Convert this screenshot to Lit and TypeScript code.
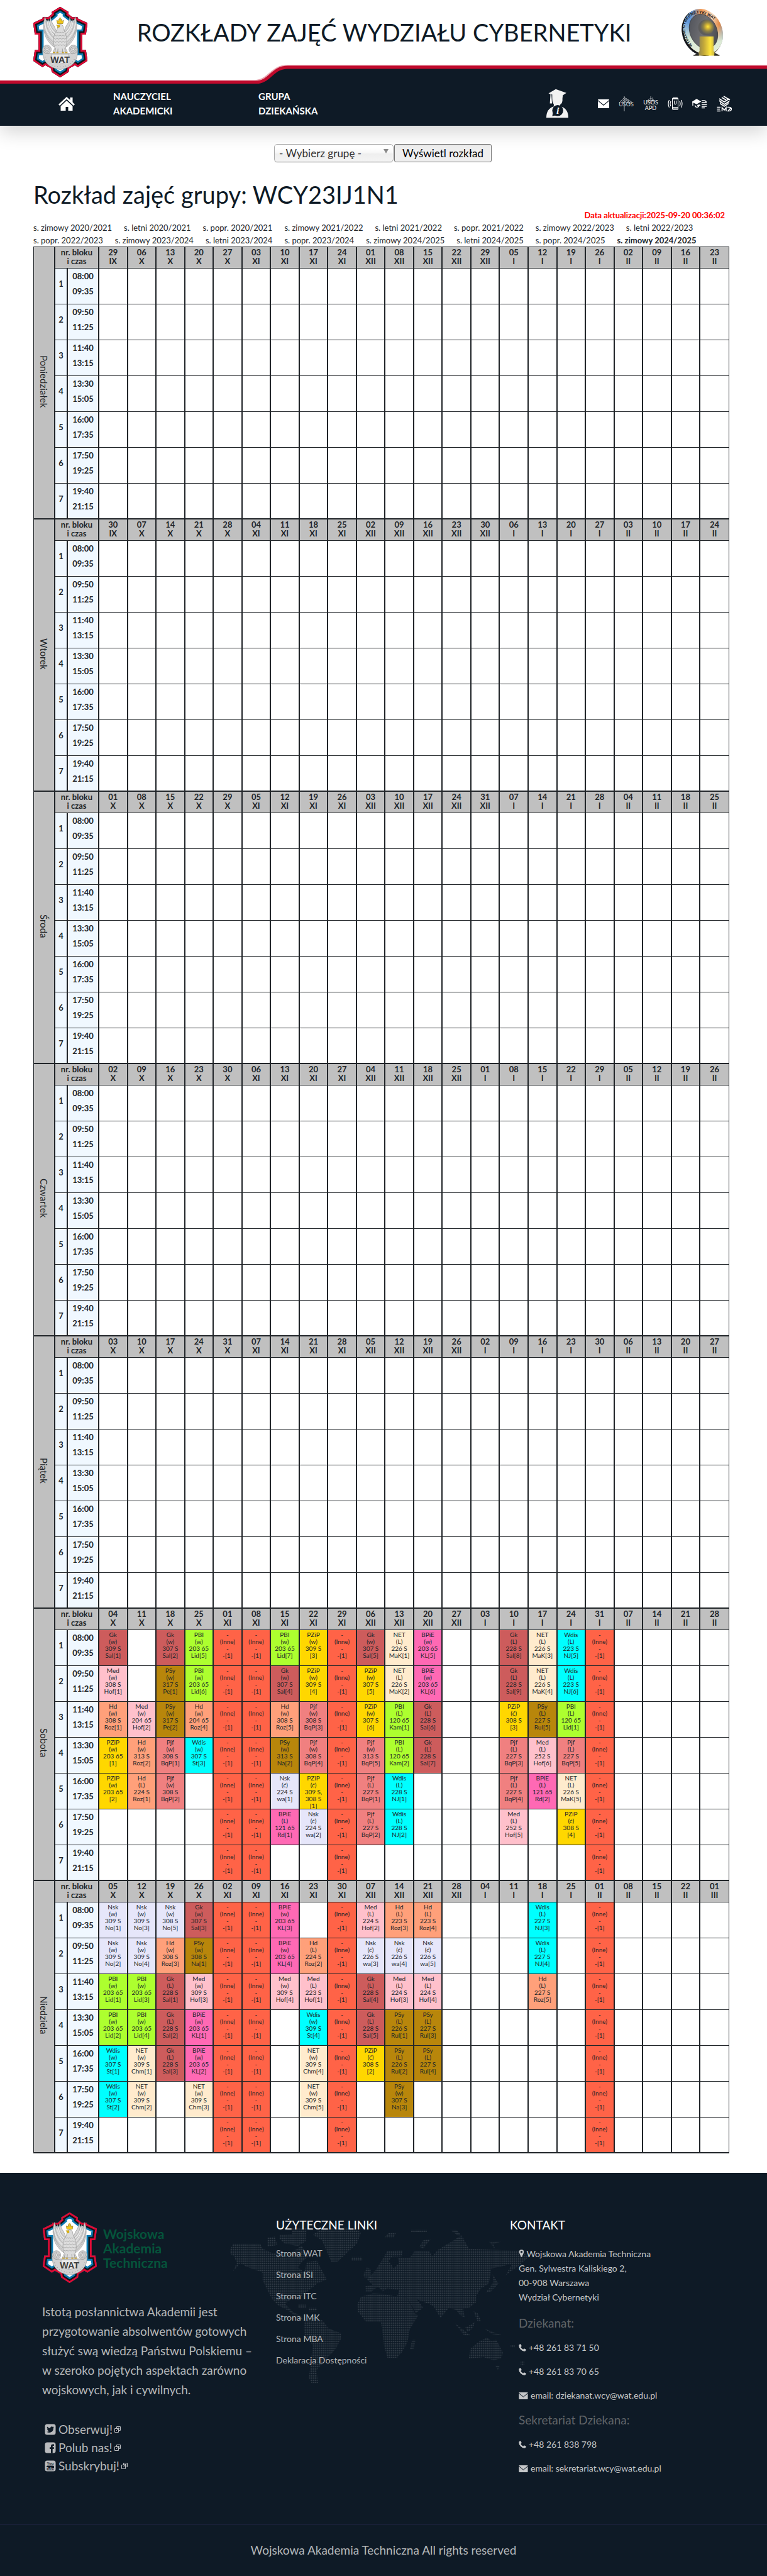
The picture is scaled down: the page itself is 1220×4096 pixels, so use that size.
import { LitElement, html, css, svg } from "lit";
import { customElement } from "lit/decorators.js";

/* ---------- timetable data ---------- */

const SLOTS = [
  ["08:00", "09:35"],
  ["09:50", "11:25"],
  ["11:40", "13:15"],
  ["13:30", "15:05"],
  ["16:00", "17:35"],
  ["17:50", "19:25"],
  ["19:40", "21:15"],
];

const WEEKS = 22;
const ROMAN = ["I", "II", "III", "IV", "V", "VI", "VII", "VIII", "IX", "X", "XI", "XII"];
const FIRST_MONDAY = Date.UTC(2025, 8, 29);
const DAY_MS = 86400000;

const OFF = Array(7).fill("-|Inne|-|-[1]");

type Column = string[];
interface Day {
  name: string;
  lessons: Record<number, Column>;
}

const SATURDAY: Record<number, Column> = {
  0: ["Gk|w|309 S|Sal[1]", "Med|w|308 S|Hof[1]", "Hd|w|308 S|Roz[1]", "PZiP|w|203 65|[1]", "PZiP|w|203 65|[2]"],
  1: ["", "", "Med|w|204 65|Hof[2]", "Hd|w|313 S|Roz[2]", "Hd|L|224 S|Roz[1]"],
  2: ["Gk|w|307 S|Sal[2]", "PSy|w|317 S|Pe[1]", "PSy|w|317 S|Pe[2]", "Pjf|w|308 S|BqP[1]", "Pjf|w|308 S|BqP[2]"],
  3: ["PBI|w|203 65|Lid[5]", "PBI|w|203 65|Lid[6]", "Hd|w|204 65|Roz[4]", "Wdis|w|307 S|St[3]"],
  4: OFF,
  5: OFF,
  6: ["PBI|w|203 65|Lid[7]", "Gk|w|307 S|Sal[4]", "Hd|w|308 S|Roz[5]", "PSy|w|313 S|Na[2]", "Nsk|ć|224 S|wa[1]", "BPiE|L|121 65|Rd[1]"],
  7: ["PZiP|w|309 S|[3]", "PZiP|w|309 S|[4]", "Pjf|w|308 S|BqP[3]", "Pjf|w|308 S|BqP[4]", "PZiP|ć|309 S,|308 S|[1]", "Nsk|ć|224 S|wa[2]"],
  8: OFF,
  9: ["Gk|w|307 S|Sal[5]", "PZiP|w|307 S|[5]", "PZiP|w|307 S|[6]", "Pjf|w|313 S|BqP[5]", "Pjf|L|227 S|BqP[1]", "Pjf|L|227 S|BqP[2]"],
  10: ["NET|L|226 S|MaK[1]", "NET|L|226 S|MaK[2]", "PBI|L|120 65|Kam[1]", "PBI|L|120 65|Kam[2]", "Wdis|L|228 S|NJ[1]", "Wdis|L|228 S|NJ[2]"],
  11: ["BPiE|w|203 65|KL[5]", "BPiE|w|203 65|KL[6]", "Gk|L|228 S|Sal[6]", "Gk|L|228 S|Sal[7]"],
  14: ["Gk|L|228 S|Sal[8]", "Gk|L|228 S|Sal[9]", "PZiP|ć|308 S|[3]", "Pjf|L|227 S|BqP[3]", "Pjf|L|227 S|BqP[4]", "Med|L|252 S|Hof[5]"],
  15: ["NET|L|226 S|MaK[3]", "NET|L|226 S|MaK[4]", "PSy|L|227 S|Rul[5]", "Med|L|252 S|Hof[6]", "BPiE|L|121 65|Rd[2]"],
  16: ["Wdis|L|223 S|NJ[5]", "Wdis|L|223 S|NJ[6]", "PBI|L|120 65|Lid[1]", "Pjf|L|227 S|BqP[5]", "NET|L|226 S|MaK[5]", "PZiP|ć|308 S|[4]"],
  17: OFF,
};

const SUNDAY: Record<number, Column> = {
  0: ["Nsk|w|309 S|No[1]", "Nsk|w|309 S|No[2]", "PBI|w|203 65|Lid[1]", "PBI|w|203 65|Lid[2]", "Wdis|w|307 S|St[1]", "Wdis|w|307 S|St[2]"],
  1: ["Nsk|w|309 S|No[3]", "Nsk|w|309 S|No[4]", "PBI|w|203 65|Lid[3]", "PBI|w|203 65|Lid[4]", "NET|w|309 S|Chm[1]", "NET|w|309 S|Chm[2]"],
  2: ["Nsk|w|308 S|No[5]", "Hd|w|308 S|Roz[3]", "Gk|L|228 S|Sal[1]", "Gk|L|228 S|Sal[2]", "Gk|L|228 S|Sal[3]"],
  3: ["Gk|w|307 S|Sal[3]", "PSy|w|308 S|Na[1]", "Med|w|309 S|Hof[3]", "BPiE|w|203 65|KL[1]", "BPiE|w|203 65|KL[2]", "NET|w|309 S|Chm[3]"],
  4: OFF,
  5: OFF,
  6: ["BPiE|w|203 65|KL[3]", "BPiE|w|203 65|KL[4]", "Med|w|309 S|Hof[4]"],
  7: ["", "Hd|L|224 S|Roz[2]", "Med|L|223 S|Hof[1]", "Wdis|w|309 S|St[4]", "NET|w|309 S|Chm[4]", "NET|w|309 S|Chm[5]"],
  8: OFF,
  9: ["Med|L|224 S|Hof[2]", "Nsk|ć|226 S|wa[3]", "Gk|L|228 S|Sal[4]", "Gk|L|228 S|Sal[5]", "PZiP|ć|308 S|[2]"],
  10: ["Hd|L|223 S|Roz[3]", "Nsk|ć|226 S|wa[4]", "Med|L|224 S|Hof[3]", "PSy|L|226 S|Rul[1]", "PSy|L|226 S|Rul[2]", "PSy|w|307 S|Na[3]"],
  11: ["Hd|L|223 S|Roz[4]", "Nsk|ć|226 S|wa[5]", "Med|L|224 S|Hof[4]", "PSy|L|227 S|Rul[3]", "PSy|L|227 S|Rul[4]"],
  15: ["Wdis|L|227 S|NJ[3]", "Wdis|L|227 S|NJ[4]", "Hd|L|227 S|Roz[5]"],
  17: OFF,
};

const DAYS: Day[] = [
  { name: "Poniedziałek", lessons: {} },
  { name: "Wtorek", lessons: {} },
  { name: "Środa", lessons: {} },
  { name: "Czwartek", lessons: {} },
  { name: "Piątek", lessons: {} },
  { name: "Sobota", lessons: SATURDAY },
  { name: "Niedziela", lessons: SUNDAY },
];

const SEMESTERS = [
  "s. zimowy 2020/2021", "s. letni 2020/2021", "s. popr. 2020/2021",
  "s. zimowy 2021/2022", "s. letni 2021/2022", "s. popr. 2021/2022",
  "s. zimowy 2022/2023", "s. letni 2022/2023", "s. popr. 2022/2023",
  "s. zimowy 2023/2024", "s. letni 2023/2024", "s. popr. 2023/2024",
  "s. zimowy 2024/2025", "s. letni 2024/2025", "s. popr. 2024/2025",
];

/* ---------- drawings ---------- */

const BADGE_OUTLINE =
  "M153 15 L196 42 L194 52 L216 69 L243 68 L240 74 L292 98 L284 157 L265 157 L265 235 L284 235 L292 290 L243 322 L228 312 L199 328 L196 347 L153 375 L110 347 L107 328 L78 312 L63 322 L16 290 L24 235 L43 235 L43 157 L24 157 L16 98 L66 74 L63 68 L92 69 L112 52 L110 42 Z";

const wing = svg`
  <path d="M76 66 Q60 115 78 165 Q92 198 122 220 L140 150 Q128 128 122 112 Q108 96 104 66 L98 96 L92 78 L88 98 L82 84 Z" fill="#d4d4d4" stroke="#8b8b8b" stroke-width="2"/>
  <path d="M80 86 Q82 140 126 178 M90 92 Q94 136 130 160 M100 92 Q106 128 134 146 M72 110 Q76 165 122 198 M74 134 Q86 180 120 210" fill="none" stroke="#9a9a9a" stroke-width="2"/>
  <path d="M86 84 Q92 130 128 168 M96 88 Q100 130 132 152 M76 100 Q78 150 124 188" fill="none" stroke="#f5f5f5" stroke-width="3"/>`;

const scroll = svg`
  <circle cx="86" cy="232" r="22" fill="#cfcfcf" stroke="#8b8b8b" stroke-width="2"/>
  <circle cx="86" cy="232" r="14" fill="none" stroke="#8f8f8f" stroke-width="3" stroke-dasharray="5 4"/>
  <circle cx="86" cy="232" r="6" fill="#e8e8e8" stroke="#8f8f8f" stroke-width="2"/>`;

const badge = (id: string) => svg`
  <svg class="badge" viewBox="14 13 280 364" role="img" aria-label="Godło WAT">
    <clipPath id=${id}><path d=${BADGE_OUTLINE}/></clipPath>
    <g clip-path="url(#${id})">
      <path d=${BADGE_OUTLINE} fill="#fff" stroke="#0a7ab0" stroke-width="52"/>
      <path d=${BADGE_OUTLINE} fill="none" stroke="#12161c" stroke-width="34"/>
      <path d=${BADGE_OUTLINE} fill="none" stroke="#e00a35" stroke-width="18"/>
    </g>
    ${wing}
    <g transform="translate(306 0) scale(-1 1)">${wing}</g>
    <path d="M140 112 Q153 96 167 112 Q170 135 180 150 Q194 190 180 225 L190 246 L116 246 L126 225 Q112 190 126 150 Q140 135 140 112 Z" fill="#dcdcdc" stroke="#8b8b8b" stroke-width="2"/>
    <path d="M126 160 q7 8 13 0 q7 8 14 0 q7 8 14 0 q7 8 13 0 M122 176 q8 8 15 0 q8 8 16 0 q8 8 16 0 q8 8 15 0 M122 192 q8 8 15 0 q8 8 16 0 q8 8 16 0 q8 8 15 0 M124 208 q8 8 14 0 q8 8 15 0 q8 8 15 0 q8 8 14 0 M132 144 q7 7 10 0 q6 8 11 0 q6 8 11 0 q5 7 10 0" fill="none" stroke="#8f8f8f" stroke-width="2"/>
    <path d="M130 226 L126 246 M142 228 L140 248 M164 228 L166 248 M176 226 L180 246" stroke="#999" stroke-width="3"/>
    <path d="M150 108 L134 108 Q136 114 143 115 L139 122 L151 118 Z" fill="#e6b800" stroke="#9a7b00" stroke-width="1"/>
    <path d="M139 101 L136 84 L145 89 L147 77 L153 84 L159 77 L161 89 L170 84 L167 101 Z" fill="#f2c81a" stroke="#8a6d00" stroke-width="2"/>
    <circle cx="153" cy="75" r="4" fill="#f2c81a" stroke="#8a6d00" stroke-width="1"/>
    ${scroll}
    <g transform="translate(306 0) scale(-1 1)">${scroll}</g>
    <path d="M64 236 Q62 322 153 334 Q244 322 242 236 Q232 262 200 252 L106 252 Q74 262 64 236 Z" fill="#d2d2d2" stroke="#8b8b8b" stroke-width="2"/>
    <path d="M110 256 H196 Q204 300 153 306 Q102 300 110 256 Z" fill="#e9e9e9" stroke="#9a9a9a" stroke-width="2"/>
    <path d="M76 270 Q92 318 153 321 Q214 318 230 270" fill="none" stroke="#999" stroke-width="4" stroke-dasharray="3 11"/>
    <path d="M116 248 h12 M134 248 h10 M162 248 h10 M178 248 h12" stroke="#c9a227" stroke-width="5"/>
    <text x="153" y="299" text-anchor="middle" class="badge-text">WAT</text>
  </svg>`;

const facultyLogo = svg`
  <svg class="faculty" viewBox="704 14 232 242" role="img" aria-label="Wydział Cybernetyki WAT">
    <defs>
      <linearGradient id="ring" x1="0" y1="0.1" x2="1" y2="0.9">
        <stop offset="0" stop-color="#86b6e8"/><stop offset="0.22" stop-color="#5f96d8"/>
        <stop offset="0.4" stop-color="#f39a55"/><stop offset="0.62" stop-color="#f6d9bd"/>
        <stop offset="0.78" stop-color="#e58a45"/><stop offset="0.95" stop-color="#4d86cf"/>
      </linearGradient>
      <linearGradient id="fade" x1="0.2" y1="1" x2="0.5" y2="0.3">
        <stop offset="0" stop-color="#e8f0dc"/><stop offset="0.5" stop-color="#dcebd6"/><stop offset="1" stop-color="#dcebd6" stop-opacity="0"/>
      </linearGradient>
      <linearGradient id="disc" x1="0" y1="0" x2="1" y2="1">
        <stop offset="0" stop-color="#4a4d55"/><stop offset="0.5" stop-color="#6f6f73"/><stop offset="1" stop-color="#3d3e44"/>
      </linearGradient>
      <linearGradient id="pillar"><stop offset="0" stop-color="#66665c"/><stop offset="0.4" stop-color="#c4a93a"/><stop offset="0.65" stop-color="#ffe63c"/><stop offset="1" stop-color="#85794a"/></linearGradient>
      <radialGradient id="ball" cx="0.62" cy="0.45"><stop offset="0" stop-color="#ffe83a"/><stop offset="0.25" stop-color="#d8b935"/><stop offset="0.6" stop-color="#8d8145"/><stop offset="1" stop-color="#5c5c5c"/></radialGradient>
      <path id="ringtext" d="M768 202 C720 150 712 80 762 48 C820 12 905 70 914 140 C918 170 912 190 896 214"/>
    </defs>
    <g transform="rotate(-24 818 132)">
      <ellipse cx="814" cy="134" rx="100" ry="122" fill="#15171d"/>
      <ellipse cx="822" cy="131" rx="98" ry="120" fill="url(#ring)"/>
      <ellipse cx="822" cy="131" rx="98" ry="120" fill="url(#fade)"/>
      <ellipse cx="824" cy="131" rx="69" ry="92" fill="url(#disc)" stroke="#2a2b30" stroke-width="2"/>
    </g>
    <circle cx="836" cy="108" r="40" fill="url(#ball)"/>
    <path d="M803 154 H875 V228 Q880 244 905 249 V253 H772 V249 Q800 244 803 228 Z" fill="url(#pillar)"/>
    <path d="M772 253 V249 Q790 246 798 236 L800 253 Z M905 253 V249 Q888 246 880 236 L878 253 Z" fill="#2b2b2b"/>
    <text class="ring-text"><textPath href="#ringtext">WYDZIAŁ CYBERNETYKI WAT</textPath></text>
  </svg>`;

const homeIcon = svg`<svg class="home-icon" viewBox="0 0 26 22" aria-hidden="true">
  <path d="M13 0 L18.5 5 V1 H22.5 V8.600 L26 12 L24 14 L13 3.800 L2 14 L0 12 Z" fill="#fff"/>
  <path d="M13 6 L22.500 14.800 V22 H15.500 V16 H11.500 V22 H3.500 V14.800 Z" fill="#fff"/></svg>`;

const graduateIcon = svg`<svg class="graduate" viewBox="36 414 112 148" aria-hidden="true">
  <path d="M47 437 L84 415 L138 434 L120 446 L118 462 Q120 486 106 494 L106 502 Q148 512 148 561 H36 Q36 514 74 503 L74 492 Q66 484 66 462 L66 442 L62 441 L65 488 H54 L57 441 Z" fill="#f2f2f2"/>
  <circle cx="94" cy="524" r="28" fill="#0e1a26"/><path d="M70 534 L66 552 L90 548 Z" fill="#0e1a26"/>
  <text x="94" y="541" text-anchor="middle" class="info-text">i</text></svg>`;

const envelope = (fill: string) => svg`<svg class="envelope" viewBox="0 0 18 14" aria-hidden="true">
  <path d="M1 0 H17 Q18 0 18 1 L9 8.500 L0 1 Q0 0 1 0 Z M0 2.600 L9 10 L18 2.600 V13 Q18 14 17 14 H1 Q0 14 0 13 Z" fill=${fill}/></svg>`;

const usosIcon = svg`<svg viewBox="0 0 24 26" aria-hidden="true" fill="none" stroke="#a9adb2">
  <path d="M1 11 L9 3 L22 11 M3 12 L9 6 L20 12 M5 13 L9 9 L18 13 M9 1 V25 M12 4 V8 M15 6 V10"/>
  <text x="12" y="17" text-anchor="middle" class="usos">USOS</text></svg>`;

const apdIcon = svg`<svg viewBox="0 0 24 26" aria-hidden="true" fill="none" stroke="#8f949a">
  <path d="M5 9 L12 4 L20 9 M7 11 L12 7 L18 11 M12 1 V12 M15 3 V9"/>
  <text x="12" y="14" text-anchor="middle" class="apd">USOS</text>
  <text x="12" y="23" text-anchor="middle" class="apd">APD</text></svg>`;

const phoneAppIcon = svg`<svg viewBox="0 0 24 26" aria-hidden="true" fill="none" stroke="#fff">
  <rect x="7.500" y="3.500" width="9" height="19" rx="1.500"/><path d="M8 5 H16 M8 19.500 H16" stroke-width="2"/>
  <path d="M10.500 8 V12 Q10.500 14 12 14 Q13.500 14 13.500 12 V8"/>
  <path d="M5 9 Q3 13 5 17 M2.500 7 Q-0.500 13 2.500 19 M19 9 Q21 13 19 17 M21.500 7 Q24.500 13 21.500 19" stroke-width="1.200"/></svg>`;

const edIcon = svg`<svg viewBox="0 0 24 26" aria-hidden="true" fill="none" stroke="#fff" stroke-width="1.400">
  <path d="M0.500 10 L7 6 L13 9.500 L7 13 Z" fill="#fff"/><path d="M1 10 V16"/>
  <path d="M11 14 Q11 18.500 7.500 18.500 Q5 18.500 4.500 15.500 M8 15.500 H13"/>
  <path d="M15 8 H19 Q21 8 22.500 10 M15 11 H23 M15 14 H23.500 M15 17 H23 M15 19.500 H20"/></svg>`;

const emdIcon = svg`<svg viewBox="0 0 24 26" aria-hidden="true" fill="none" stroke="#fff" stroke-width="1.600">
  <path d="M4 5 L12 10 L20 5 M8 3 L15 7 M11 1 L21 7 M4 8 L12 14 L20 9 M6 11 V13 L12 17 L18 13 V11"/>
  <path d="M0.500 18.500 H6 M0.500 21.500 H5 M0.500 24.500 H6 M8.500 25 V19 L12 23 L15 19 V25 M17 18.500 H20 Q23.500 19 23.500 21.500 Q23 25 18 24.500 L22 20" stroke-width="1.500"/></svg>`;

const squareIcon = (kind: string) => svg`<svg class="social-icon" viewBox="0 0 18 18" aria-hidden="true">
  <rect x="0.500" y="0.500" width="17" height="17" rx="3.500" fill="#b9bbbe"/>
  ${kind === "twitter"
    ? svg`<path d="M15 5.200 Q14.300 5.600 13.600 5.700 Q14.400 5.200 14.700 4.300 Q13.900 4.800 13 4.900 Q12.200 4.100 11.200 4.200 Q8.800 4.500 9 7 Q6 6.900 4 4.500 Q3 6.500 4.800 8 L3.700 7.700 Q3.800 9.600 5.700 10.200 L4.700 10.300 Q5.200 11.600 6.900 11.700 Q5.300 13 3.200 12.800 Q8 15.500 12 12.200 Q14.200 10 14 6.500 Z" fill="#0e1a26"/>`
    : kind === "facebook"
      ? svg`<path d="M10 17.500 V11 H8 V8.300 H10 V6.500 Q10 3.400 13 3.400 H15 V6 H13.800 Q12.700 6 12.700 7 V8.300 H15 L14.700 11 H12.700 V17.500 Z" fill="#0e1a26"/>`
      : svg`<rect x="3" y="8.500" width="12" height="7.500" rx="1.500" fill="#0e1a26"/>
        <text x="9" y="7.300" text-anchor="middle" class="yt dark">You</text><text x="9" y="14.700" text-anchor="middle" class="yt">Tube</text>`}
  </svg>`;

const externalIcon = svg`<svg class="external" viewBox="0 0 10 10" aria-hidden="true" fill="none" stroke="#b9bbbe">
  <path d="M3.500 0.500 H9.500 V6.500 H6.500 M3.500 0.500 V3.500 M0.500 3.500 H6.500 V9.500 H0.500 Z M3 7 L7.500 2.500 M5 2.500 H7.500 V5"/></svg>`;

const pinIcon = svg`<svg class="pin" viewBox="0 0 10 14" aria-hidden="true">
  <path fill-rule="evenodd" d="M5 0 A4.300 4.300 0 0 1 9.300 4.300 C9.300 6 8.800 6.500 5.800 13.300 Q5 14.400 4.200 13.300 C1.200 6.500 0.700 6 0.700 4.300 A4.300 4.300 0 0 1 5 0 Z M5 2.300 A2.100 2.100 0 1 0 5 6.500 A2.100 2.100 0 1 0 5 2.300 Z" fill="#c5c7c9"/></svg>`;

const phoneIcon = svg`<svg class="phone" viewBox="0 0 12 12" aria-hidden="true">
  <path d="M0.300 2.500 Q0.400 0.800 2.600 0.200 Q3.200 0 3.500 0.700 L4.600 2.900 Q4.900 3.400 4.300 3.900 L3.300 4.900 Q4.600 7.600 7.200 8.800 L8.100 7.700 Q8.600 7.100 9.200 7.400 L11.300 8.600 Q11.900 9 11.700 9.700 Q11.200 11.700 9.100 11.700 Q6 11.700 3 8.700 Q0.200 5.700 0.300 2.500 Z" fill="#c5c7c9"/></svg>`;

const CONTINENTS = [
  "387,154 392,144 437,144 441,152 453,158 482,163 498,152 506,147 516,165 506,174 500,183 510,192 514,174 531,172 547,203 531,210 518,221 506,230 500,236 488,236 478,243 490,256 504,263 510,272 500,267 482,254 465,245 457,236 449,221 441,205 441,192 412,181 404,176 392,189 398,176 394,165 387,160",
  "469,129 490,128 490,118 514,118 512,140 500,148 478,144 469,136",
  "449,134 461,132 465,146 449,149",
  "524,129 539,120 563,117 588,117 604,125 598,143 584,156 565,174 555,174 547,156 539,138",
  "588,166 606,166 606,172 588,172",
  "500,245 513,245 513,250 500,250",
  "518,250 531,250 531,256 518,256",
  "510,272 522,266 539,270 551,285 571,292 571,301 563,317 551,330 535,348 530,354 533,375 522,375 518,366 522,330 524,312 510,294 509,281",
  "608,196 614,183 620,186 620,200 610,200",
  "614,203 629,187 640,169 648,156 673,155 671,165 656,165 650,172 658,185 667,176 665,168 685,167 693,156 718,157 722,165 732,154 758,138 771,130 783,152 820,154 869,156 883,165 869,178 844,196 854,178 820,185 816,210 803,218 795,230 795,241 783,250 773,252 777,267 769,263 762,254 750,250 736,267 724,247 697,236 707,250 695,259 681,234 664,232 667,221 648,218 640,223 632,215 622,223 612,223 611,214 624,213",
  "604,232 624,226 640,227 664,232 681,234 693,259 699,263 685,285 681,308 671,325 664,333 648,333 642,312 640,294 637,274 612,273 599,256 598,245",
  "685,319 689,303 695,303 691,319",
  "760,276 781,292 785,296 775,296",
  "777,283 793,274 789,285 781,290",
  "809,285 838,296 822,294",
  "791,256 797,258 803,272 797,272",
  "822,194 832,210 820,223 811,225 824,207",
  "785,319 797,308 813,299 820,305 828,303 840,325 836,334 824,337 807,332 783,334",
  "827,346 834,346 831,353",
  "869,339 875,339 875,345 869,345",
  "852,312 859,312 859,316 852,316",
  "687,121 713,121 713,125 687,125",
  "701,149 707,138 720,136 707,152",
  "752,121 762,121 770,130 764,130",
  "642,134 650,126 662,126 658,134",
  "816,140 838,140 824,144 826,152",
];

const worldMap = svg`<svg class="map" viewBox="387 113 496 264" aria-hidden="true">
  <defs><pattern id="dots" width="3.400" height="3.800" patternUnits="userSpaceOnUse"><circle cx="1.700" cy="1.900" r="1.250" fill="#303a45"/></pattern></defs>
  ${CONTINENTS.map((p) => svg`<polygon points=${p} fill="url(#dots)"/>`)}
</svg>`;

/* ---------- timetable element ---------- */

@customElement("group-timetable")
class GroupTimetable extends LitElement {
  static styles = css`
    :host { display: block; }
    table {
      width: 100%;
      table-layout: fixed;
      border-collapse: separate;
      border-spacing: 0;
      border: 1px solid #212529;
      border-width: 1px 0 0 1px;
      box-sizing: border-box;
      color: #212529;
      font-size: 13px;
    }
    th, td {
      box-sizing: border-box;
      padding: 0;
      border: solid #212529;
      border-width: 0 2px 1px 0;
      text-align: center;
      vertical-align: top;
    }
    .col-day { width: 34px; }
    .col-no { width: 20px; }
    .col-time { width: 50px; }
    .row th { height: 57px; line-height: 24px; background: #f0f8ff; }
    .head th { height: 34px; line-height: 14px; padding-top: 1px; background: #c0c0c0; }
    .row td { height: 57px; background: #fff; }
    th:last-child, td:last-child { border-right-width: 1px; }
    .last > * { border-bottom-width: 2px; }
    .head .day {
      padding: 0;
      border-bottom-width: 2px;
      vertical-align: middle;
      font-size: 15px;
      font-weight: 400;
      line-height: 20px;
    }
    .day span { display: inline-block; writing-mode: vertical-rl; }
    .row .no { padding-top: 12px; }
    .time span, .head span { display: block; }
    .head .day span { display: inline-block; }
    .lesson { height: 52px; padding-top: 2px; font-size: 10px; line-height: 11px; }
    .lesson span { display: block; white-space: nowrap; }
    .row .gk { background: #cd5c5c; }
    .row .med { background: #ffc0cb; }
    .row .hd { background: #ffa07a; }
    .row .pzip { background: #ffd700; }
    .row .psy { background: #b8860b; }
    .row .pjf { background: #f08080; }
    .row .pbi { background: #adff2f; }
    .row .wdis { background: #00ffff; }
    .row .nsk { background: #e6e6fa; }
    .row .bpie { background: #ff69b4; }
    .row .net { background: #ffebcd; }
    .row .inne { background: #ff6347; }
  `;

  private date(day: number, week: number) {
    const d = new Date(FIRST_MONDAY + (day + week * 7) * DAY_MS);
    return html`<th scope="col"><span>${String(d.getUTCDate()).padStart(2, "0")}</span><span>${ROMAN[d.getUTCMonth()]}</span></th>`;
  }

  private cell(entry?: string) {
    if (!entry) return html`<td></td>`;
    const [subject, kind, ...rest] = entry.split("|");
    const name = subject === "-" ? "inne" : subject.toLowerCase();
    return html`<td class=${name}><div class="lesson">
      <span>${subject}</span><span>(${kind})</span>${rest.map((line) => html`<span>${line}</span>`)}
    </div></td>`;
  }

  render() {
    const weeks = Array.from({ length: WEEKS }, (_, i) => i);
    return html`<table>
      <colgroup><col class="col-day"><col class="col-no"><col class="col-time"><col span=${WEEKS}></colgroup>
      ${DAYS.map((day, d) => html`<tbody>
        <tr class="head">
          <th class="day" rowspan="8" scope="rowgroup"><span>${day.name}</span></th>
          <th colspan="2"><span>nr. bloku</span><span>i czas</span></th>
          ${weeks.map((w) => this.date(d, w))}
        </tr>
        ${SLOTS.map(([from, to], s) => html`<tr class="row ${s === 6 ? "last" : ""}">
          <th class="no" scope="row">${s + 1}</th>
          <th class="time" scope="row"><span>${from}</span><span>${to}</span></th>
          ${weeks.map((w) => this.cell(day.lessons[w]?.[s]))}
        </tr>`)}
      </tbody>`)}
    </table>`;
  }
}

/* ---------- page ---------- */

@customElement("app-root")
class AppRoot extends LitElement {
  static styles = css`
    :host {
      display: block;
      background: #fff;
      color: #212529;
      font-family: Lato, "Liberation Sans", sans-serif;
      font-size: 15px;
    }
    * { box-sizing: border-box; }
    a { color: inherit; text-decoration: none; }
    h1, h2, h3, p, ul { margin: 0; padding: 0; font-weight: 400; }
    svg { display: block; flex: none; }
    header { position: relative; box-shadow: 0 10px 28px rgba(0, 0, 0, 0.17); }
    .banner {
      display: flex;
      align-items: flex-start;
      justify-content: space-between;
      padding: 10px 66px 9px 52px;
    }
    .badge { width: 88px; height: 114px; }
    .badge-text { font: 700 46px "Liberation Sans Narrow", "Liberation Sans", sans-serif; fill: #3c3c3c; }
    .faculty { width: 72px; height: 76px; margin-top: 4px; }
    .ring-text { font: 700 21px "Liberation Sans", sans-serif; fill: #16181c; }
    .title { padding-top: 18px; font-size: 38px; line-height: 46px; color: #0e1a26; }
    .edge { position: absolute; left: 0; top: 100px; width: 100%; height: 34px; }
    nav {
      position: relative;
      display: flex;
      align-items: center;
      min-height: 67px;
      padding: 0 56px 4px 93px;
      background: #0e1a26;
      color: #fff;
    }
    .home-icon { width: 26px; height: 22px; }
    .menu { display: flex; flex: 1; margin-left: 61px; font-weight: 700; line-height: 23px; }
    .menu a { width: 231px; }
    .menu span { display: block; }
    .tools { display: flex; align-items: center; gap: 15px; }
    .tools svg { width: 24px; height: 26px; }
    .tools .graduate { width: 35px; height: 47px; margin-right: 32px; }
    .tools .envelope { width: 18px; height: 14px; }
    .info-text { font: italic 700 50px "Liberation Serif", serif; fill: #fff; }
    .usos { font: 9px Lato, sans-serif; fill: #d5d7d9; stroke: none; }
    .apd { font: 9px Lato, sans-serif; fill: #fff; stroke: none; }
    main { padding: 29px 60px 31px 53px; }
    form { display: flex; justify-content: center; gap: 1px; margin-right: -5px; }
    .picker { position: relative; }
    select, button { height: 29px; font: 17px Lato, sans-serif; }
    select {
      width: 190px;
      padding: 0 7px;
      appearance: none;
      border: 1px solid #aaa;
      border-radius: 5px;
      background: linear-gradient(#fff 20%, #f6f6f6 50%, #eee 52%, #f4f4f4);
      box-shadow: 0 1px 1px rgba(0, 0, 0, 0.1);
      color: #333;
    }
    .arrow { position: absolute; right: 8px; top: 8px; width: 8px; height: 7px; }
    button { padding: 0 12px; border: 1px solid #767676; border-radius: 3px; background: #efefef; color: #000; }
    h1 { margin-top: 28px; font-size: 38px; line-height: 46px; color: #0e1a26; }
    .updated { padding-right: 7px; text-align: right; font-size: 13px; font-weight: 700; line-height: 20px; color: #f00; }
    .semesters { display: flex; flex-wrap: wrap; column-gap: 19px; font-size: 13px; line-height: 20px; list-style: none; }
    .semesters .current { font-weight: 700; }
    footer { position: relative; background: #0e1a26; color: #b5b7b9; }
    .map { position: absolute; left: 30%; top: 83px; width: 39%; }
    .columns {
      position: relative;
      display: grid;
      grid-template-columns: 372fr 372fr 342fr;
      padding: 62px 67px 63px;
      min-height: 558px;
    }
    .brand { display: flex; align-items: center; gap: 9px; font-size: 21px; font-weight: 700; line-height: 23px; color: #05543b; }
    .brand span { display: block; }
    .about { padding: 29px 0 0; font-size: 19px; line-height: 31px; }
    .social { padding: 33px 0 0 4px; list-style: none; font-size: 19px; line-height: 29px; }
    .social a { display: flex; align-items: center; }
    .social-icon { width: 18px; height: 18px; margin-right: 4px; }
    .yt { font: 700 6px "Liberation Sans Narrow", sans-serif; fill: #b9bbbe; }
    .dark { fill: #0e1a26; }
    .external { width: 10px; height: 10px; margin-left: 3px; }
    h2 { padding-top: 9px; font-size: 19px; line-height: 24px; color: #fff; }
    .links { padding-top: 16px; list-style: none; font-size: 14px; line-height: 34px; }
    .contact { padding: 22px 0 0 14px; font-size: 14px; line-height: 23px; color: #c5c7c9; }
    .contact address { margin-bottom: 10px; font-style: normal; }
    .contact p { display: flex; align-items: center; gap: 4px; line-height: 38px; }
    .contact h3 { padding: 5px 0; font-size: 19px; line-height: 30px; color: #606468; }
    .contact svg { display: inline-block; }
    .pin { width: 9px; height: 12px; }
    .phone { width: 12px; height: 12px; }
    .contact .envelope { width: 15px; height: 11px; }
    .copyright { position: relative; border-top: 1px solid #2a2850; padding: 27px 0; text-align: center; font-size: 19px; line-height: 28px; }
  `;

  private headerBlock() {
    return html`<header>
      <svg class="edge" aria-hidden="true">
        <path d="M0 31 H406 C430 31 432 7 458 7 H6000 V34 H0 Z" fill="#0e1a26"/>
        <path d="M-9 28 H404 C428 28 430 4 458 4 H6000" fill="none" stroke="#e9a3ae" stroke-width="2"/>
        <path d="M-9 31 H406 C430 31 432 7 458 7 H6000" fill="none" stroke="#c00a2c" stroke-width="5"/>
      </svg>
      <div class="banner">
        <a href="#wat">${badge("badge-top")}</a>
        <div class="title">ROZKŁADY ZAJĘĆ WYDZIAŁU CYBERNETYKI</div>
        <a href="#wcy">${facultyLogo}</a>
      </div>
      <nav aria-label="Menu">
        <a href="#start" aria-label="Start">${homeIcon}</a>
        <div class="menu">
          <a href="#nauczyciel"><span>NAUCZYCIEL</span><span>AKADEMICKI</span></a>
          <a href="#grupa"><span>GRUPA</span><span>DZIEKAŃSKA</span></a>
        </div>
        <div class="tools">
          <a href="#student" aria-label="Student">${graduateIcon}</a>
          <a href="#poczta" aria-label="Poczta">${envelope("#fff")}</a>
          <a href="#usos" aria-label="USOS">${usosIcon}</a>
          <a href="#apd" aria-label="APD">${apdIcon}</a>
          <a href="#mobilny" aria-label="Mobilny USOS">${phoneAppIcon}</a>
          <a href="#ed" aria-label="E-dziekanat">${edIcon}</a>
          <a href="#emd" aria-label="E-MD">${emdIcon}</a>
        </div>
      </nav>
    </header>`;
  }

  private footerBlock() {
    const links = ["Strona WAT", "Strona ISI", "Strona ITC", "Strona IMK", "Strona MBA", "Deklaracja Dostępności"];
    const social = [["twitter", "Obserwuj!"], ["facebook", "Polub nas!"], ["youtube", "Subskrybuj!"]];
    const phone = (n: string) => html`<p>${phoneIcon}<a href="tel:${n.replace(/ /g, "")}">${n}</a></p>`;
    const mail = (m: string) => html`<p>${envelope("#c5c7c9")}<a href="mailto:${m}">email: ${m}</a></p>`;
    return html`<footer>
      ${worldMap}
      <div class="columns">
        <section>
          <div class="brand">${badge("badge-bottom")}<div><span>Wojskowa</span><span>Akademia</span><span>Techniczna</span></div></div>
          <p class="about">Istotą posłannictwa Akademii jest<br>przygotowanie absolwentów gotowych<br>służyć swą wiedzą Państwu Polskiemu –<br>w szeroko pojętych aspektach zarówno<br>wojskowych, jak i cywilnych.</p>
          <ul class="social">
            ${social.map(([kind, label]) => html`<li><a href="#${kind}">${squareIcon(kind)}${label}${externalIcon}</a></li>`)}
          </ul>
        </section>
        <section>
          <h2>UŻYTECZNE LINKI</h2>
          <ul class="links">${links.map((l) => html`<li><a href="#link">${l}</a></li>`)}</ul>
        </section>
        <section>
          <h2>KONTAKT</h2>
          <div class="contact">
            <address>${pinIcon} Wojskowa Akademia Techniczna<br>Gen. Sylwestra Kaliskiego 2,<br>00-908 Warszawa<br>Wydział Cybernetyki</address>
            <h3>Dziekanat:</h3>
            ${phone("+48 261 83 71 50")}${phone("+48 261 83 70 65")}${mail("dziekanat.wcy@wat.edu.pl")}
            <h3>Sekretariat Dziekana:</h3>
            ${phone("+48 261 838 798")}${mail("sekretariat.wcy@wat.edu.pl")}
          </div>
        </section>
      </div>
      <div class="copyright">Wojskowa Akademia Techniczna All rights reserved</div>
    </footer>`;
  }

  render() {
    return html`${this.headerBlock()}
      <main>
        <form @submit=${(e: Event) => e.preventDefault()}>
          <div class="picker">
            <select aria-label="Grupa"><option>- Wybierz grupę -</option></select>
            <svg class="arrow" viewBox="0 0 8 7" aria-hidden="true"><path d="M0 0 H8 L4 7 Z" fill="#888"/></svg>
          </div>
          <button type="submit">Wyświetl rozkład</button>
        </form>
        <h1>Rozkład zajęć grupy: WCY23IJ1N1</h1>
        <div class="updated">Data aktualizacji:2025-09-20 00:36:02</div>
        <ul class="semesters">
          ${SEMESTERS.map((s) => html`<li><a href="#semestr">${s}</a></li>`)}
          <li class="current"><a href="#semestr" aria-current="true">s. zimowy 2024/2025</a></li>
        </ul>
        <group-timetable></group-timetable>
      </main>
      ${this.footerBlock()}`;
  }
}
